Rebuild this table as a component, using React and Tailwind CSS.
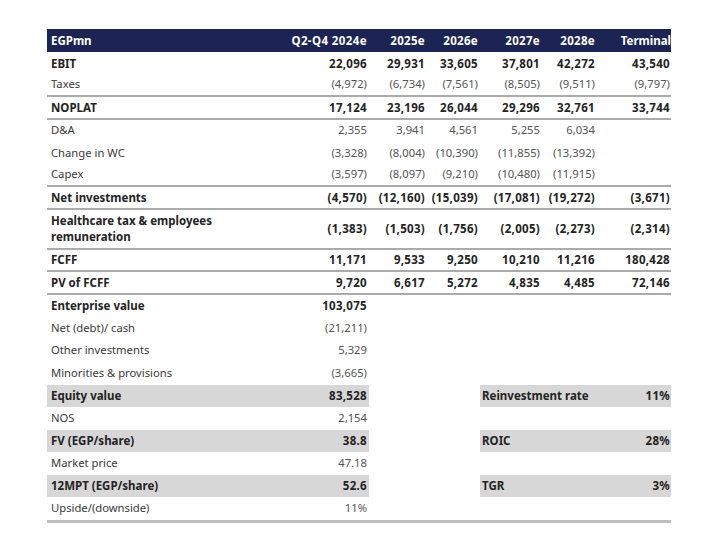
import React from "react";

const upper = [
  { l: "EBIT", b: true, v: ["22,096", "29,931", "33,605", "37,801", "42,272", "43,540"] },
  { l: "Taxes", line: true, v: ["(4,972)", "(6,734)", "(7,561)", "(8,505)", "(9,511)", "(9,797)"] },
  { l: "NOPLAT", b: true, line: true, v: ["17,124", "23,196", "26,044", "29,296", "32,761", "33,744"] },
  { l: "D&A", v: ["2,355", "3,941", "4,561", "5,255", "6,034", ""] },
  { l: "Change in WC", v: ["(3,328)", "(8,004)", "(10,390)", "(11,855)", "(13,392)", ""] },
  { l: "Capex", line: true, v: ["(3,597)", "(8,097)", "(9,210)", "(10,480)", "(11,915)", ""] },
  { l: "Net investments", b: true, line: true, v: ["(4,570)", "(12,160)", "(15,039)", "(17,081)", "(19,272)", "(3,671)"] },
  { l: "hc", b: true, line: true, tall: true, v: ["(1,383)", "(1,503)", "(1,756)", "(2,005)", "(2,273)", "(2,314)"] },
  { l: "FCFF", b: true, line: true, v: ["11,171", "9,533", "9,250", "10,210", "11,216", "180,428"] },
  { l: "PV of FCFF", b: true, line: true, v: ["9,720", "6,617", "5,272", "4,835", "4,485", "72,146"] },
];

const lower = [
  { l: "Enterprise value", b: true, v: "103,075" },
  { l: "Net (debt)/ cash", v: "(21,211)" },
  { l: "Other investments", v: "5,329" },
  { l: "Minorities & provisions", v: "(3,665)" },
  { l: "Equity value", b: true, shade: true, v: "83,528", side: ["Reinvestment rate", "11%"] },
  { l: "NOS", v: "2,154" },
  { l: "FV (EGP/share)", b: true, shade: true, v: "38.8", side: ["ROIC", "28%"] },
  { l: "Market price", v: "47.18" },
  { l: "12MPT (EGP/share)", b: true, shade: true, v: "52.6", side: ["TGR", "3%"] },
  { l: "Upside/(downside)", v: "11%" },
];

const cols = "grid grid-cols-[233px_89px_58px_53px_62px_55px_74px]";

export default function App() {
  return (
    <div
      className="w-[720px] h-[548px] bg-white pt-[29px] pl-[47px] text-[11.25px]"
      style={{ fontFamily: '"Noto Sans", "Open Sans", sans-serif' }}
    >
      <div className="w-[624px]">
        <div className={`${cols} h-[23px] items-center bg-[#1c2453] text-white font-bold text-[11.5px]`}>
          <div className="pl-1">EGPmn</div>
          <div className="text-right pr-0.5 tracking-[0.4px]">Q2-Q4 2024e</div>
          <div className="text-right pr-0.5 tracking-[0.3px]">2025e</div>
          <div className="text-right pr-0.5 tracking-[0.3px]">2026e</div>
          <div className="text-right pr-0.5 tracking-[0.3px]">2027e</div>
          <div className="text-right pr-0.5 tracking-[0.3px]">2028e</div>
          <div className="text-right">Terminal</div>
        </div>
        {upper.map((r, i) => (
          <div
            key={i}
            className={`${cols} items-center ${r.tall ? "h-[40px]" : "h-[22.5px]"} ${
              r.line ? "border-b-2 border-[#ababab]" : ""
            } ${r.b ? "font-bold text-[#232323] text-[11.5px]" : "text-[#3a3a3a]"}`}
          >
            <div className={`pl-1 ${r.tall ? "leading-[16px]" : ""}`}>
              {r.l === "hc" ? (
                <>
                  Healthcare tax &amp; employees
                  <br />
                  remuneration
                </>
              ) : (
                r.l
              )}
            </div>
            {r.v.map((x, j) => (
              <div
                key={j}
                className={`text-right ${j === 5 ? "pr-px" : "pr-0.5"} ${
                  r.b ? "tracking-[0.3px]" : "text-[#555555]"
                }`}
              >
                {x}
              </div>
            ))}
          </div>
        ))}
        <div className="border-b-[3px] border-[#bdbdbd]">
          {lower.map((r, i) => (
            <div
              key={i}
              className={`${cols} items-center h-[22.5px] ${
                r.b ? "font-bold text-[#232323] text-[11.5px]" : "text-[#3a3a3a]"
              }`}
            >
              <div className={`col-span-2 flex h-full items-center justify-between ${r.shade ? "bg-[#d7d7d7]" : ""}`}>
                <span className="pl-1">{r.l}</span>
                <span className={`pr-0.5 ${r.b ? "tracking-[0.3px]" : "text-[#555555]"}`}>{r.v}</span>
              </div>
              <div className="col-span-2" />
              {r.side ? (
                <div className="col-span-3 flex h-full items-center justify-between bg-[#d7d7d7] font-bold text-[#232323]">
                  <span className="pl-0.5">{r.side[0]}</span>
                  <span className="pr-px tracking-[0.3px]">{r.side[1]}</span>
                </div>
              ) : (
                <div className="col-span-3" />
              )}
            </div>
          ))}
        </div>
      </div>
    </div>
  );
}
